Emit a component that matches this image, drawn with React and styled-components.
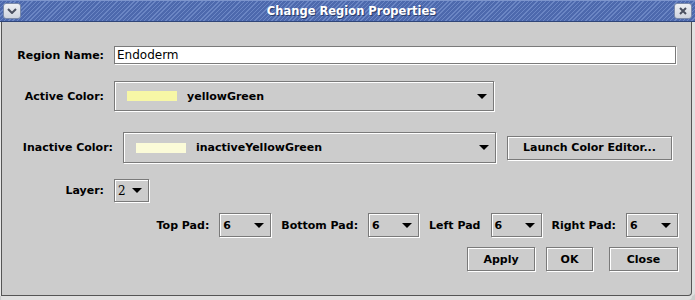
import React from 'react';
import styled, {createGlobalStyle} from 'styled-components';

//global reset so the window fills the page
const GlobalStyle = createGlobalStyle`
	html, body{
		margin: 0;
		padding: 0;
		background: #cccccc;
	}
	body{
		font-family: "DejaVu Sans", "Liberation Sans", sans-serif;
	}
`

//little down arrow used in every combo box
function Arrow(){
	return(
		<svg width="10" height="5" viewBox="0 0 10 5">
			<polygon points="0,0 10,0 5,5" fill="#000"/>
		</svg>
	);
}

//combo box with optional colour swatch
function Combo({width, swatch, text, plain}){
	return(
		<ComboBox $width={width}>
			{swatch && <Swatch $color={swatch}/>}
			<ComboText $plain={plain}>{text}</ComboText>
			<ArrowWrap><Arrow/></ArrowWrap>
		</ComboBox>
	);
}

function App(){
	const pads = [
		{label: 'Top Pad:', width: 52},
		{label: 'Bottom Pad:', width: 51},
		{label: 'Left Pad', width: 51},
		{label: 'Right Pad:', width: 52},
	];
	return(
		<>
		<GlobalStyle/>
		<Window>
			<TitleBar>
				<TitleButton>
					<svg width="10" height="6" viewBox="0 0 10 6">
						<polyline points="1,1 5,5 9,1" fill="none" stroke="#4a5060" strokeWidth="2"/>
					</svg>
				</TitleButton>
				<Title>Change Region Properties</Title>
				<TitleButton>
					<svg width="8" height="8" viewBox="0 0 8 8">
						<path d="M1 1 L7 7 M7 1 L1 7" stroke="#4a5060" strokeWidth="2"/>
					</svg>
				</TitleButton>
			</TitleBar>
			<Body>
				<Row $top={24} $height={18}>
					<Label $width={95}>Region Name:</Label>
					<TextField>Endoderm</TextField>
				</Row>
				<Row $top={17} $height={30}>
					<Label $width={95}>Active Color:</Label>
					<Combo width={380} swatch="#f7f7a6" text="yellowGreen"/>
				</Row>
				<Row $top={21} $height={31}>
					<Label $width={104}>Inactive Color:</Label>
					<Combo width={373} swatch="#fbfbd8" text="inactiveYellowGreen"/>
					<Button $width={165} $height={24} $left={11}>Launch Color Editor...</Button>
				</Row>
				<Row $top={16} $height={23}>
					<Label $width={95}>Layer:</Label>
					<Combo width={35} text="2" plain/>
				</Row>
				<RightRow $top={11} $height={24}>
					{pads.map((p) => (
						<PadGroup key={p.label}>
							<Label>{p.label}</Label>
							<Combo width={p.width} text="6"/>
						</PadGroup>
					))}
				</RightRow>
				<RightRow $top={10} $height={24}>
					<Button $width={68} $height={24}>Apply</Button>
					<Button $width={47} $height={24} $left={11}>OK</Button>
					<Button $width={69} $height={24} $left={16}>Close</Button>
				</RightRow>
			</Body>
		</Window>
		</>
	);
}

const Window = styled.div`
	width: 695px;
	height: 300px;
	box-sizing: border-box;
	background: #cccccc;
	display: flex;
	flex-direction: column;
	overflow: hidden;
`

const TitleBar = styled.div`
	height: 22px;
	box-sizing: border-box;
	display: flex;
	align-items: center;
	justify-content: space-between;
	padding: 0 3px 0 3px;
	border-top: 1px solid #7d95cc;
	border-bottom: 1px solid #2f4578;
	background: repeating-linear-gradient(-45deg, #4d69ad 0px, #4d69ad 2px, #6b86c4 2px, #6b86c4 3px);
`

const TitleButton = styled.div`
	width: 18px;
	height: 16px;
	box-sizing: border-box;
	border: 1px solid #7b8aa8;
	border-radius: 3px;
	background: linear-gradient(#eef0f4, #cfd4de);
	display: flex;
	align-items: center;
	justify-content: center;
`

const Title = styled.div`
	color: #ffffff;
	font-weight: bold;
	font-size: 11.5px;
	padding-left: 8px;
	text-shadow: 1px 1px 0 #2b3d6a;
`

const Body = styled.div`
	flex: 1;
	display: flex;
	flex-direction: column;
	border-left: 1px solid #555;
	border-right: 1px solid #555;
	border-bottom: 1px solid #555;
	border-bottom-right-radius: 4px;
	box-shadow: -1px 0 0 #e8e8e8, 3px 0 0 #e0e0e0, 0 4px 0 #e0e0e0;
	margin: 0 3px 4px 1px;
	padding: 0 13px 0 7px;
`

const Row = styled.div`
	display: flex;
	align-items: center;
	margin-top: ${(p) => p.$top}px;
	height: ${(p) => p.$height}px;
`

const RightRow = styled(Row)`
	justify-content: flex-end;
`

const PadGroup = styled.div`
	display: flex;
	align-items: center;
	gap: 10px;
	margin-left: 10px;
	height: 100%;
`

const Label = styled.div`
	font-size: 11px;
	font-weight: bold;
	color: #000;
	text-align: right;
	white-space: nowrap;
	width: ${(p) => (p.$width ? `${p.$width}px` : 'auto')};
	margin-right: ${(p) => (p.$width ? '10px' : '0')};
`

//etched look used by java metal widgets
const etched = `
	box-sizing: border-box;
	border: 1px solid #7a7a7a;
	box-shadow: 1px 1px 0 #ffffff, inset 1px 1px 0 #ffffff;
`

const TextField = styled.div`
	flex: 1;
	height: 18px;
	box-sizing: border-box;
	border: 1px solid #7a7a7a;
	box-shadow: 1px 1px 0 #ffffff;
	background: #ffffff;
	font-size: 12px;
	line-height: 16px;
	padding-left: 2px;
	margin-right: 2px;
	color: #000;
`

const ComboBox = styled.div`
	${etched}
	width: ${(p) => p.$width}px;
	height: 100%;
	display: flex;
	align-items: center;
	padding: 0 6px 0 3px;
	flex-shrink: 0;
`

const Swatch = styled.div`
	width: 50px;
	height: 10px;
	background: ${(p) => p.$color};
	margin-left: 9px;
	margin-right: 10px;
	flex-shrink: 0;
`

const ComboText = styled.div`
	flex: 1;
	font-size: ${(p) => (p.$plain ? '12px' : '11px')};
	font-weight: ${(p) => (p.$plain ? 'normal' : 'bold')};
	font-family: ${(p) => (p.$plain ? '"DejaVu Serif", serif' : 'inherit')};
	color: #000;
	white-space: nowrap;
`

const ArrowWrap = styled.div`
	display: flex;
	align-items: center;
`

const Button = styled.div`
	${etched}
	width: ${(p) => p.$width}px;
	height: ${(p) => p.$height}px;
	margin-left: ${(p) => p.$left || 0}px;
	display: flex;
	align-items: center;
	justify-content: center;
	font-size: 11px;
	font-weight: bold;
	color: #000;
	flex-shrink: 0;
	white-space: nowrap;
`

export default App;
